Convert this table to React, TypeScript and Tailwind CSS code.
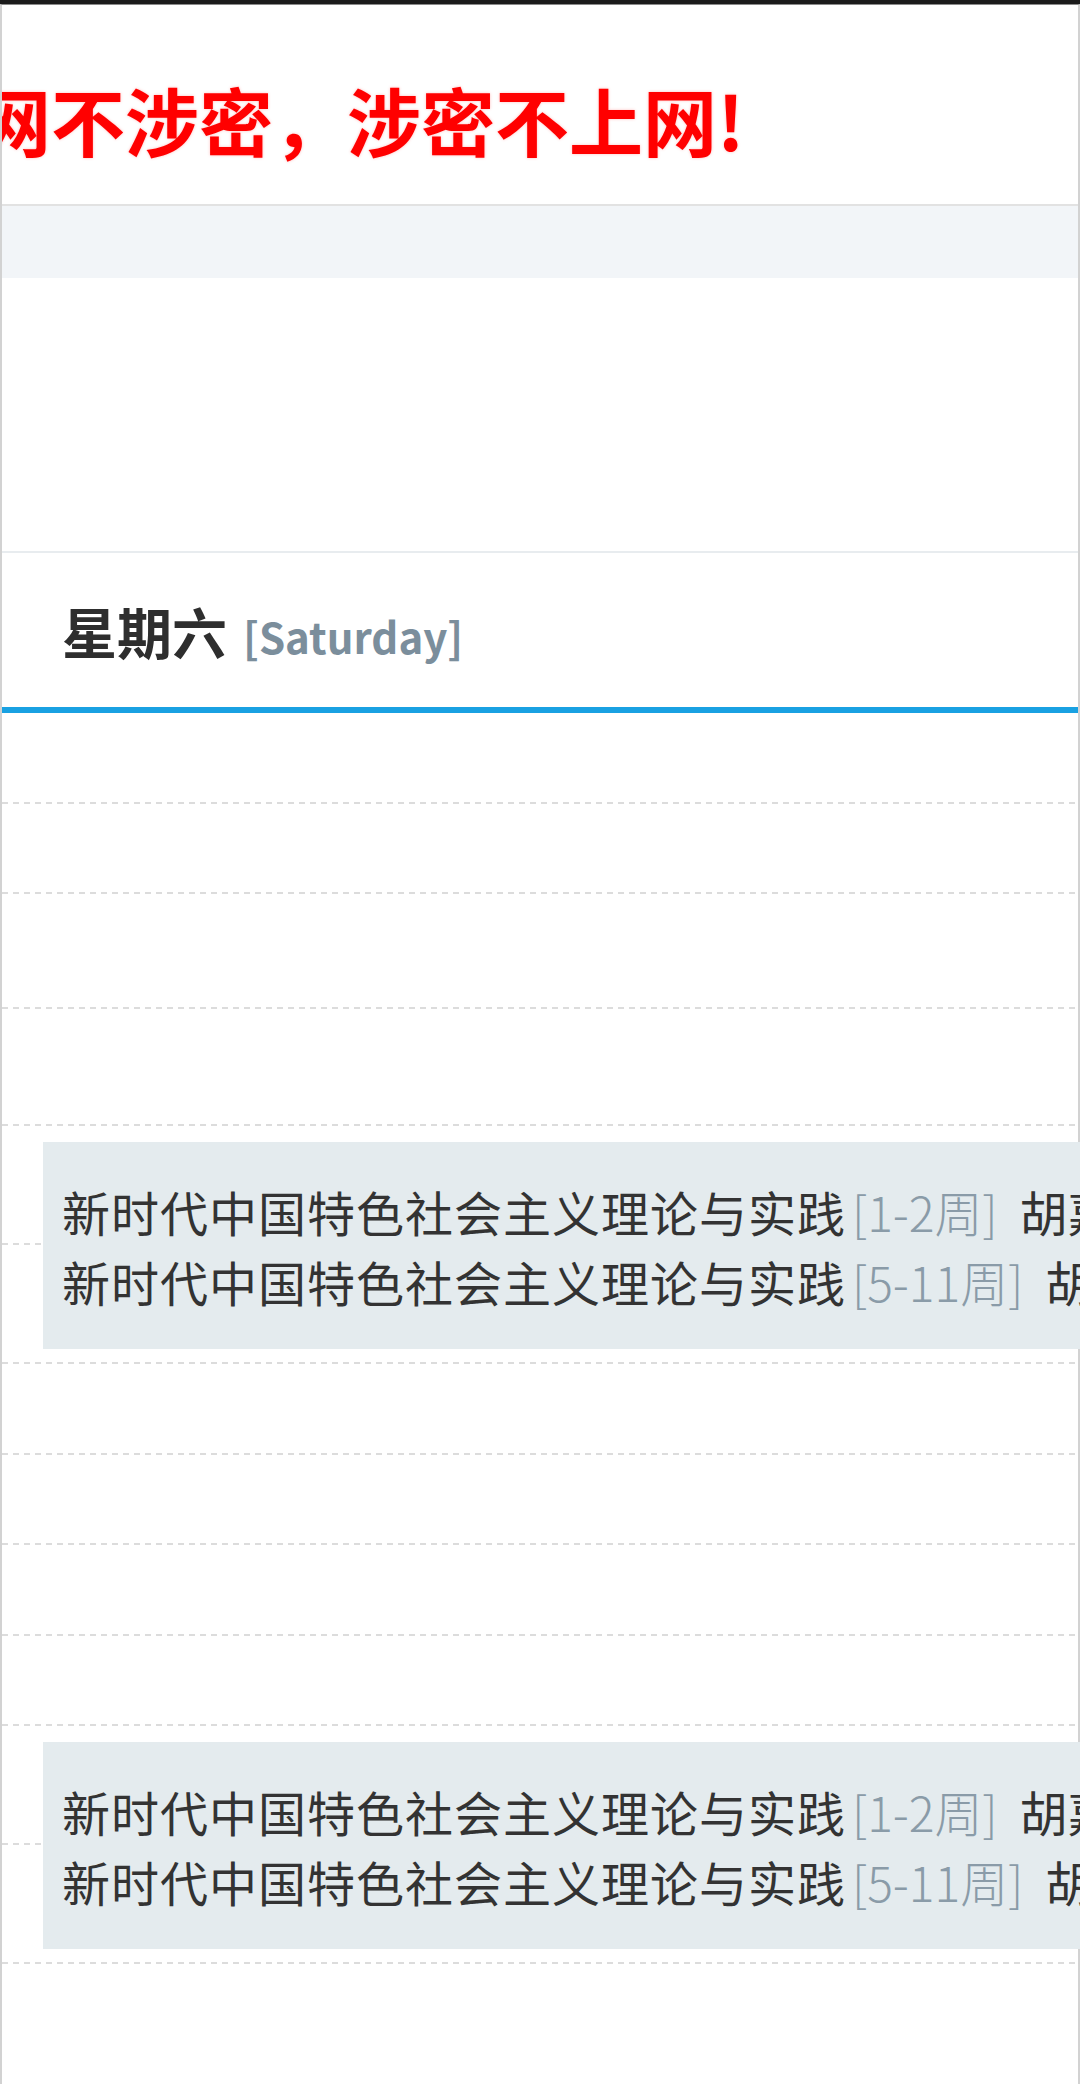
import React from "react";

type Course = { name: string; weeks: string; teacher: string };

const courses: Course[] = [
  { name: "新时代中国特色社会主义理论与实践", weeks: "[1-2周]", teacher: "胡嘉" },
  { name: "新时代中国特色社会主义理论与实践", weeks: "[5-11周]", teacher: "胡嘉" },
];

// row heights between the dashed lines, top to bottom
const rowsA = [91, 90, 115, 117];
const rowsB = [91, 90, 91, 90];

function Dash() {
  return (
    <div className="h-[2px] w-full bg-[repeating-linear-gradient(to_right,#dcdcdc_0_6px,transparent_6px_11px)]" />
  );
}

function Row({ h }: { h: number }) {
  return (
    <div className="flex flex-col justify-end" style={{ height: h }}>
      <Dash />
    </div>
  );
}

function CourseBlock() {
  return (
    <div className="relative">
      <div className="flex h-[119px] flex-col justify-end">
        <Dash />
      </div>
      <div className="flex h-[119px] flex-col justify-end">
        <Dash />
      </div>
      <div className="absolute top-[16px] bottom-[15px] left-[41px] right-[-4px] flex flex-col justify-center overflow-hidden bg-[#e4ebee] pl-[19px]">
        {courses.map((c, i) => (
          <div key={i} className="whitespace-nowrap text-[48px] leading-[70px] text-[#333]">
            <span className="tracking-[1px]">{c.name}</span>
            <span className="ml-[6px] font-light text-[#8a9ba8]">{c.weeks}</span>
            <span className="ml-[22px]">{c.teacher}</span>
          </div>
        ))}
      </div>
    </div>
  );
}

export default function App() {
  return (
    <div className="h-[2084px] w-[1080px] overflow-hidden bg-white font-['Noto_Sans_CJK_SC','Noto_Sans',sans-serif]">
      <div className="h-[4px] bg-[#1b1b1b]" />
      <div className="h-[2080px] border-x-2 border-t border-[#d2d2d2] border-t-[#8a8a8a]">
        {/* banner */}
        <div className="h-[201px] overflow-hidden border-b-2 border-[#e2e2e2] pt-[77px]">
          <div className="ml-[-99px] whitespace-nowrap text-[74px] font-bold leading-[74px] text-[#ff0000] [text-shadow:0_0_3px_rgba(255,60,60,0.35)]">
            上网不涉密，涉密不上网!
          </div>
        </div>
        <div className="h-[72px] bg-[#f2f5f8]" />
        <div className="h-[275px] border-b-2 border-[#e8ecef]" />

        {/* day header */}
        <div className="flex h-[154px] items-baseline pl-[60px] pt-[47px]">
          <span className="text-[55px] font-bold leading-[60px] text-[#2e2e2e]">星期六</span>
          <span className="ml-[16px] text-[42px] font-bold leading-[60px] text-[#7b8e9c]">[Saturday]</span>
        </div>
        <div className="h-[6px] bg-[#19a1e2]" />

        {rowsA.map((h, i) => (
          <Row key={"a" + i} h={h} />
        ))}
        <CourseBlock />
        {rowsB.map((h, i) => (
          <Row key={"b" + i} h={h} />
        ))}
        <CourseBlock />
        <div className="h-[130px]" />
      </div>
    </div>
  );
}
